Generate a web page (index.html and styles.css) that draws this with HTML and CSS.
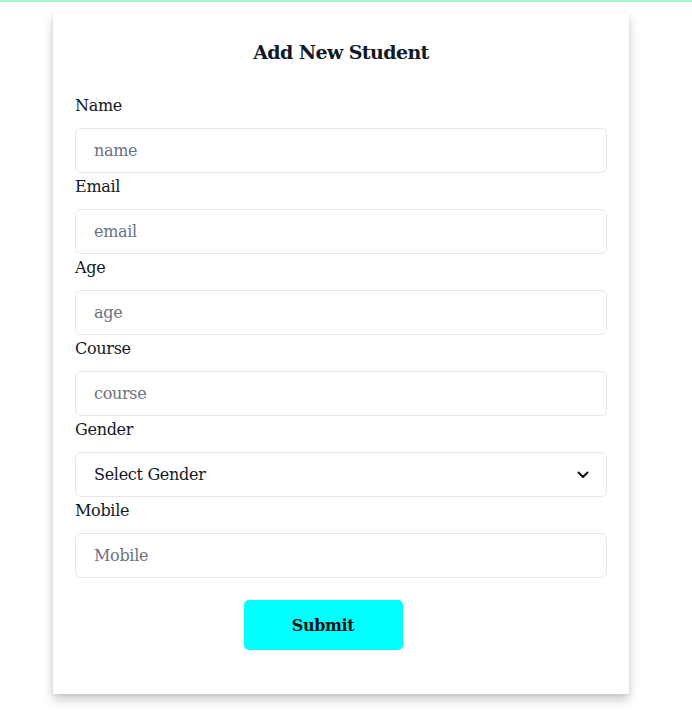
FILE: index.html
```html
<!DOCTYPE html>
<html>
<head>
<meta charset="utf-8">
<link rel="stylesheet" href="styles.css">
</head>
<body>
<div class="topbar"></div>
<main class="page">
  <form class="card">
    <h2 class="title">Add New Student</h2>
    <label class="label" for="name">Name</label>
    <input class="field" id="name" placeholder="name">
    <label class="label" for="email">Email</label>
    <input class="field" id="email" placeholder="email">
    <label class="label" for="age">Age</label>
    <input class="field" id="age" placeholder="age">
    <label class="label" for="course">Course</label>
    <input class="field" id="course" placeholder="course">
    <label class="label" for="gender">Gender</label>
    <div class="select-wrap">
      <select class="field select" id="gender">
        <option>Select Gender</option>
        <option>Male</option>
        <option>Female</option>
      </select>
      <svg class="chev" width="12" height="8" viewBox="0 0 12 8"><path d="M1.5 1.5 L6 6 L10.5 1.5" fill="none" stroke="#111" stroke-width="2" stroke-linecap="round" stroke-linejoin="round"/></svg>
    </div>
    <label class="label" for="mobile">Mobile</label>
    <input class="field" id="mobile" placeholder="Mobile">
    <div class="actions">
      <button class="submit" type="button">Submit</button>
    </div>
  </form>
</main>
</body>
</html>
```
FILE: styles.css
```css
* { box-sizing: border-box; }
html, body { margin: 0; padding: 0; background: #fff; }
body { font-family: "DejaVu Serif", "Liberation Serif", serif; color: #111827; }
.topbar { height: 2px; background: #a7f3d0; }
.page { display: flex; justify-content: center; padding-top: 11px; padding-right: 10px; padding-bottom: 30px; }
.card {
  width: 576px;
  background: #fff;
  box-shadow: 0 6px 10px rgba(0,0,0,0.2), 0 1px 3px rgba(0,0,0,0.08);
  padding: 22px 22px 44px;
  display: flex;
  flex-direction: column;
}
.title {
  margin: 0 0 23px;
  text-align: center;
  font-size: 19px;
  line-height: 34px;
  font-weight: 700;
  letter-spacing: -0.6px;
  color: #111827;
}
.label {
  display: block;
  font-size: 16px;
  line-height: 28px;
  margin-bottom: 8px;
  letter-spacing: -0.3px;
  color: #111827;
}
.field {
  display: block;
  width: 100%;
  height: 45px;
  border: 1px solid #e5e7eb;
  border-radius: 6px;
  padding: 0 18px;
  font-family: inherit;
  font-size: 16px;
  letter-spacing: -0.3px;
  color: #111827;
  background: #fff;
  outline: none;
}
.field::placeholder { color: #6b7280; }
.select-wrap { position: relative; }
.select { appearance: none; -webkit-appearance: none; }
.chev { position: absolute; right: 18px; top: 19px; pointer-events: none; }
.actions { display: flex; justify-content: center; margin-top: 22px; padding-right: 36px; }
.submit {
  width: 159px;
  height: 50px;
  border: none;
  border-radius: 5px;
  background: #00ffff;
  font-family: inherit;
  font-size: 16px;
  font-weight: 700;
  letter-spacing: -0.4px;
  color: #111;
}
```
